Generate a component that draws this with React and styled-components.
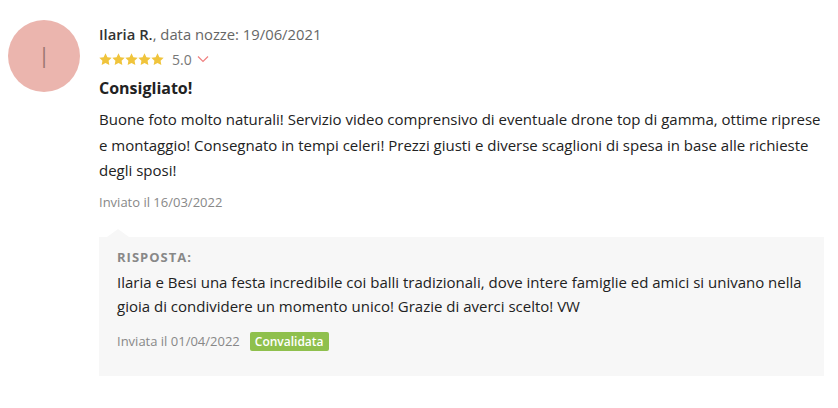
import React from 'react';
import styled, { createGlobalStyle } from 'styled-components';

const GlobalStyle = createGlobalStyle`
  body {
    margin: 0;
    background: #fff;
    font-family: 'Open Sans', 'Liberation Sans', sans-serif;
    color: #222;
  }
`;

const Review = styled.div`
  display: flex;
  align-items: flex-start;
  gap: 19px;
  padding: 20px 14px 0 8px;
`;

const Avatar = styled.div`
  flex: none;
  width: 72px;
  height: 72px;
  border-radius: 50%;
  background: #ebb5ae;
  color: #9c7771;
  display: flex;
  align-items: center;
  justify-content: center;
  font-size: 30px;
  font-weight: 300;
`;

const Body = styled.div`
  flex: 1;
  min-width: 0;
  padding-top: 4px;
`;

const Author = styled.div`
  font-size: 14.8px;
  line-height: 20px;
  color: #666;
  b {
    color: #333;
    font-weight: 600;
  }
`;

const RatingRow = styled.div`
  display: flex;
  align-items: center;
  gap: 5px;
  margin-top: 7px;
  height: 16px;
  font-size: 14px;
  color: #777;
`;

const Stars = styled.div`
  display: flex;
  margin-right: 3px;
`;

const Title = styled.h3`
  margin: 10px 0 0;
  font-size: 16px;
  line-height: 22px;
  font-weight: 700;
  color: #222;
`;

const Text = styled.p`
  margin: 8px 0 0;
  font-size: 15px;
  line-height: 25.5px;
  color: #222;
`;

const Meta = styled.div`
  margin-top: ${({ $top }) => $top || 0}px;
  font-size: 13px;
  line-height: 18px;
  color: #888;
  display: flex;
  align-items: center;
  gap: 10px;
`;

const Reply = styled.div`
  position: relative;
  margin-top: 26px;
  background: #f7f7f7;
  padding: 11px 20px 25px 18px;
  &::before {
    content: '';
    position: absolute;
    top: -8px;
    left: 8px;
    border-left: 11px solid transparent;
    border-right: 11px solid transparent;
    border-bottom: 8px solid #f7f7f7;
  }
`;

const ReplyLabel = styled.div`
  font-size: 13px;
  line-height: 18px;
  font-weight: 700;
  letter-spacing: 1px;
  color: #888;
`;

const ReplyText = styled.p`
  margin: 4px 0 0;
  font-size: 15px;
  line-height: 24px;
  color: #222;
`;

const Badge = styled.span`
  background: #8fc04d;
  color: #fff;
  font-size: 12px;
  font-weight: 600;
  line-height: 19px;
  padding: 0 5px;
  border-radius: 2px;
`;

const Star = () => (
  <svg width="13" height="12.5" viewBox="0 0 24 23">
    <path
      d="M12 0.5l3.5 7.2 7.9 1.1-5.7 5.5 1.4 7.8L12 18.4l-7.1 3.7 1.4-7.8L0.6 8.8l7.9-1.1z"
      fill="#f0c43c"
    />
  </svg>
);

const Chevron = () => (
  <svg width="12" height="8" viewBox="0 0 12 8">
    <path d="M1 1.5l5 5 5-5" fill="none" stroke="#f08080" strokeWidth="1.2" />
  </svg>
);

export default function App() {
  return (
    <>
      <GlobalStyle />
      <Review>
        <Avatar>I</Avatar>
        <Body>
          <Author>
            <b>Ilaria R.</b>, data nozze: 19/06/2021
          </Author>
          <RatingRow>
            <Stars>
              {[0, 1, 2, 3, 4].map((i) => (
                <Star key={i} />
              ))}
            </Stars>
            5.0
            <Chevron />
          </RatingRow>
          <Title>Consigliato!</Title>
          <Text>
            Buone foto molto naturali! Servizio video comprensivo di eventuale drone top di gamma,
            ottime riprese e montaggio! Consegnato in tempi celeri! Prezzi giusti e diverse
            scaglioni di spesa in base alle richieste degli sposi!
          </Text>
          <Meta $top={9}>Inviato il 16/03/2022</Meta>
          <Reply>
            <ReplyLabel>RISPOSTA:</ReplyLabel>
            <ReplyText>
              Ilaria e Besi una festa incredibile coi balli tradizionali, dove intere famiglie ed
              amici si univano nella gioia di condividere un momento unico! Grazie di averci
              scelto! VW
            </ReplyText>
            <Meta $top={14}>
              Inviata il 01/04/2022
              <Badge>Convalidata</Badge>
            </Meta>
          </Reply>
        </Body>
      </Review>
    </>
  );
}
